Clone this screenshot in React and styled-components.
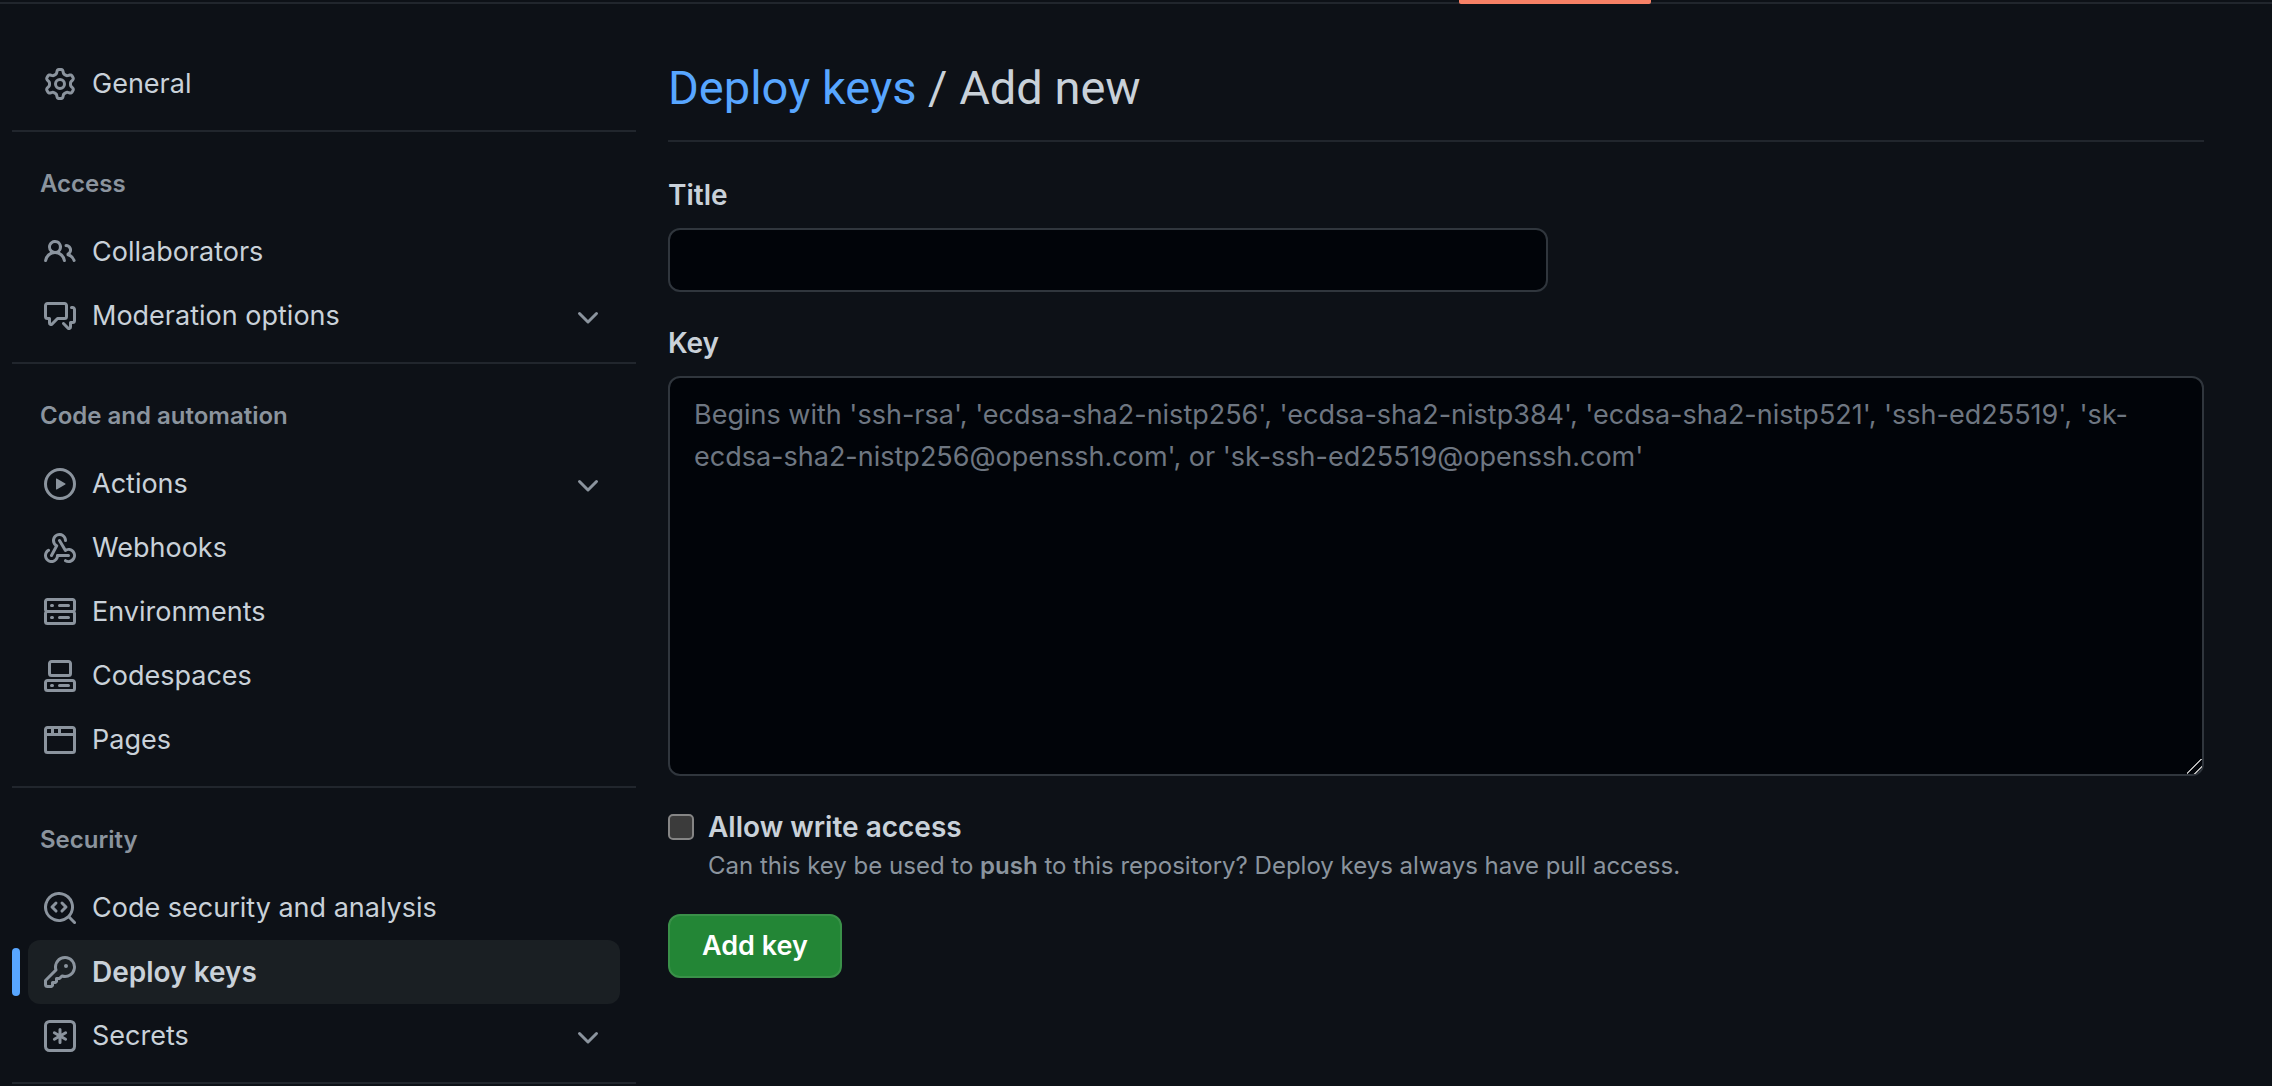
import React from "react";
import styled, { createGlobalStyle } from "styled-components";

const color = {
  canvas: "#0d1117",
  inset: "#010409",
  text: "#c9d1d9",
  muted: "#8b949e",
  subtle: "#6e7681",
  line: "#21262d",
  border: "#30363d",
  accent: "#58a6ff",
  tab: "#f78166",
};

const GlobalStyle = createGlobalStyle`
  *, *::before, *::after { box-sizing: border-box; }
  body {
    margin: 0;
    background: ${color.canvas};
    color: ${color.text};
    color-scheme: dark;
    font-family: Inter, "Liberation Sans", sans-serif;
    font-size: 27px;
    line-height: 42px;
  }
`;

const icons = {
  gear: [
    "M8 0a8.2 8.2 0 0 1 .701.031C9.444.095 9.99.645 10.16 1.29l.288 1.107c.018.066.079.158.212.224.231.114.454.243.668.386.123.082.233.09.299.071l1.103-.303c.644-.176 1.392.021 1.82.63.27.385.506.792.704 1.218.315.675.111 1.422-.364 1.891l-.814.806c-.049.048-.098.147-.088.294.016.257.016.515 0 .772-.01.147.038.246.088.294l.814.806c.475.469.679 1.216.364 1.891a7.977 7.977 0 0 1-.704 1.217c-.428.61-1.176.807-1.82.63l-1.102-.302c-.067-.019-.177-.011-.3.071a5.909 5.909 0 0 1-.668.386c-.133.066-.194.158-.211.224l-.29 1.106c-.168.646-.715 1.196-1.458 1.26a8.006 8.006 0 0 1-1.402 0c-.743-.064-1.289-.614-1.458-1.26l-.289-1.106c-.018-.066-.079-.158-.212-.224a5.738 5.738 0 0 1-.668-.386c-.123-.082-.233-.09-.299-.071l-1.103.303c-.644.176-1.392-.021-1.82-.63a8.12 8.12 0 0 1-.704-1.218c-.315-.675-.111-1.422.363-1.891l.815-.806c.05-.048.098-.147.088-.294a6.214 6.214 0 0 1 0-.772c.01-.147-.038-.246-.088-.294l-.815-.806C.635 6.045.431 5.298.746 4.623a7.92 7.92 0 0 1 .704-1.217c.428-.61 1.176-.807 1.82-.63l1.102.302c.067.019.177.011.3-.071.214-.143.437-.272.668-.386.133-.066.194-.158.211-.224l.29-1.106C6.009.645 6.556.095 7.299.03 7.53.01 7.764 0 8 0Zm-.571 1.525c-.036.003-.108.036-.137.146l-.289 1.105c-.147.561-.549.967-.998 1.189-.173.086-.34.183-.5.29-.417.278-.97.423-1.529.27l-1.103-.303c-.109-.03-.175.016-.195.045-.22.312-.412.644-.573.99-.014.031-.021.11.059.19l.815.806c.411.406.562.957.53 1.456a4.709 4.709 0 0 0 0 .582c.032.499-.119 1.05-.53 1.456l-.815.806c-.081.08-.073.159-.059.19.162.346.353.677.573.989.02.03.085.076.195.046l1.102-.303c.56-.153 1.113-.008 1.53.27.161.107.328.204.501.29.447.222.85.629.997 1.189l.289 1.105c.029.109.101.143.137.146a6.6 6.6 0 0 0 1.142 0c.036-.003.108-.036.137-.146l.289-1.105c.147-.561.549-.967.998-1.189.173-.086.34-.183.5-.29.417-.278.97-.423 1.529-.27l1.103.303c.109.029.175-.016.195-.045.22-.313.411-.644.573-.99.014-.031.021-.11-.059-.19l-.815-.806c-.411-.406-.562-.957-.53-1.456a4.709 4.709 0 0 0 0-.582c-.032-.499.119-1.05.53-1.456l.815-.806c.081-.08.073-.159.059-.19a6.464 6.464 0 0 0-.573-.989c-.02-.03-.085-.076-.195-.046l-1.102.303c-.56.153-1.113.008-1.53-.27a4.44 4.44 0 0 0-.501-.29c-.447-.222-.85-.629-.997-1.189l-.289-1.105c-.029-.11-.101-.143-.137-.146a6.6 6.6 0 0 0-1.142 0ZM11 8a3 3 0 1 1-6 0 3 3 0 0 1 6 0ZM9.5 8a1.5 1.5 0 1 0-3.001.001A1.5 1.5 0 0 0 9.5 8Z",
  ],
  people: [
    "M2 5.5a3.5 3.5 0 1 1 5.898 2.549 5.508 5.508 0 0 1 3.034 4.084.75.75 0 1 1-1.482.235 4 4 0 0 0-7.9 0 .75.75 0 0 1-1.482-.236A5.507 5.507 0 0 1 3.102 8.05 3.493 3.493 0 0 1 2 5.5ZM11 4a3.001 3.001 0 0 1 2.22 5.018 5.01 5.01 0 0 1 2.56 3.012.749.749 0 0 1-.885.954.752.752 0 0 1-.549-.514 3.507 3.507 0 0 0-2.522-2.372.75.75 0 0 1-.574-.73v-.352a.75.75 0 0 1 .416-.672A1.5 1.5 0 0 0 11 5.5.75.75 0 0 1 11 4Zm-5.5-.5a2 2 0 1 0-.001 3.999A2 2 0 0 0 5.5 3.5Z",
  ],
  discussion: [
    "M1.75 1h8.5c.966 0 1.75.784 1.75 1.75v5.5A1.75 1.75 0 0 1 10.25 10H7.061l-2.574 2.573A1.458 1.458 0 0 1 2 11.543V10h-.25A1.75 1.75 0 0 1 0 8.25v-5.5C0 1.784.784 1 1.75 1ZM1.5 2.75v5.5c0 .138.112.25.25.25h1a.75.75 0 0 1 .75.75v2.19l2.72-2.72a.749.749 0 0 1 .53-.22h3.5a.25.25 0 0 0 .25-.25v-5.5a.25.25 0 0 0-.25-.25h-8.5a.25.25 0 0 0-.25.25Zm13 2a.25.25 0 0 0-.25-.25h-.5a.75.75 0 0 1 0-1.5h.5c.966 0 1.75.784 1.75 1.75v5.5A1.75 1.75 0 0 1 14.25 12H14v1.543a1.458 1.458 0 0 1-2.487 1.03L9.22 12.28a.749.749 0 0 1 .326-1.275.749.749 0 0 1 .734.215l2.22 2.22v-2.19a.75.75 0 0 1 .75-.75h1a.25.25 0 0 0 .25-.25Z",
  ],
  play: [
    "M8 0a8 8 0 1 1 0 16A8 8 0 0 1 8 0ZM1.5 8a6.5 6.5 0 1 0 13 0 6.5 6.5 0 0 0-13 0Zm4.879-2.773 4.264 2.559a.25.25 0 0 1 0 .428l-4.264 2.559A.25.25 0 0 1 6 10.559V5.442a.25.25 0 0 1 .379-.215Z",
  ],
  webhook: [
    "M5.5 4.25a2.25 2.25 0 0 1 4.5 0 .75.75 0 0 0 1.5 0 3.75 3.75 0 1 0-6.14 2.889l-2.272 4.258a.75.75 0 0 0 1.324.706L7 7.25a.75.75 0 0 0-.309-1.015A2.25 2.25 0 0 1 5.5 4.25Z",
    "M7.364 3.607a.75.75 0 0 1 1.03.257l2.608 4.349a3.75 3.75 0 1 1-.628 6.785.75.75 0 0 1 .752-1.299 2.25 2.25 0 1 0-.033-3.88.75.75 0 0 1-1.03-.256L7.107 4.636a.75.75 0 0 1 .257-1.03Z",
    "M2.9 8.776A.75.75 0 0 1 2.625 9.8 2.25 2.25 0 1 0 6 11.75a.75.75 0 0 1 .75-.751h5.5a.75.75 0 0 1 0 1.5H7.425a3.751 3.751 0 1 1-5.55-3.998.75.75 0 0 1 1.024.274Z",
  ],
  server: [
    "M1.75 1h12.5c.966 0 1.75.784 1.75 1.75v4c0 .372-.116.717-.314 1 .198.283.314.628.314 1v4a1.75 1.75 0 0 1-1.75 1.75H1.75A1.75 1.75 0 0 1 0 12.75v-4c0-.358.109-.707.314-1a1.739 1.739 0 0 1-.314-1v-4C0 1.784.784 1 1.75 1ZM1.5 2.75v4c0 .138.112.25.25.25h12.5a.25.25 0 0 0 .25-.25v-4a.25.25 0 0 0-.25-.25H1.75a.25.25 0 0 0-.25.25Zm.25 5.75a.25.25 0 0 0-.25.25v4c0 .138.112.25.25.25h12.5a.25.25 0 0 0 .25-.25v-4a.25.25 0 0 0-.25-.25ZM7 4.75A.75.75 0 0 1 7.75 4h4.5a.75.75 0 0 1 0 1.5h-4.5A.75.75 0 0 1 7 4.75ZM7.75 10h4.5a.75.75 0 0 1 0 1.5h-4.5a.75.75 0 0 1 0-1.5ZM3 4.75A.75.75 0 0 1 3.75 4h.5a.75.75 0 0 1 0 1.5h-.5A.75.75 0 0 1 3 4.75ZM3.75 10h.5a.75.75 0 0 1 0 1.5h-.5a.75.75 0 0 1 0-1.5Z",
  ],
  codespaces: [
    "M0 11.25c0-.966.784-1.75 1.75-1.75h12.5c.966 0 1.75.784 1.75 1.75v3A1.75 1.75 0 0 1 14.25 16H1.75A1.75 1.75 0 0 1 0 14.25Zm2-9.5C2 .784 2.784 0 3.75 0h8.5C13.216 0 14 .784 14 1.75v5a1.75 1.75 0 0 1-1.75 1.75h-8.5A1.75 1.75 0 0 1 2 6.75Zm1.75-.25a.25.25 0 0 0-.25.25v5c0 .138.112.25.25.25h8.5a.25.25 0 0 0 .25-.25v-5a.25.25 0 0 0-.25-.25Zm-2 9.5a.25.25 0 0 0-.25.25v3c0 .138.112.25.25.25h12.5a.25.25 0 0 0 .25-.25v-3a.25.25 0 0 0-.25-.25Z",
    "M7 12.75a.75.75 0 0 1 .75-.75h4.5a.75.75 0 0 1 0 1.5h-4.5a.75.75 0 0 1-.75-.75Zm-4 0a.75.75 0 0 1 .75-.75h.5a.75.75 0 0 1 0 1.5h-.5a.75.75 0 0 1-.75-.75Z",
  ],
  browser: [
    "M0 2.75C0 1.784.784 1 1.75 1h12.5c.966 0 1.75.784 1.75 1.75v10.5A1.75 1.75 0 0 1 14.25 15H1.75A1.75 1.75 0 0 1 0 13.25ZM14.5 6h-13v7.25c0 .138.112.25.25.25h12.5a.25.25 0 0 0 .25-.25Zm-6-3.5v2h6V2.75a.25.25 0 0 0-.25-.25ZM5 2.5v2h2v-2Zm-3.25 0a.25.25 0 0 0-.25.25V4.5h2v-2Z",
  ],
  codescan: [
    "M8.47 4.97a.75.75 0 0 0 0 1.06L9.94 7.5 8.47 8.97a.75.75 0 1 0 1.06 1.06l2-2a.75.75 0 0 0 0-1.06l-2-2a.75.75 0 0 0-1.06 0ZM6.53 6.03a.75.75 0 0 0-1.06-1.06l-2 2a.75.75 0 0 0 0 1.06l2 2a.75.75 0 1 0 1.06-1.06L5.06 7.5l1.47-1.47Z",
    "M12.246 13.307a7.501 7.501 0 1 1 1.06-1.06l2.474 2.473a.749.749 0 0 1-.326 1.275.749.749 0 0 1-.734-.215ZM1.5 7.5a6.002 6.002 0 0 0 3.608 5.504 6.002 6.002 0 0 0 6.486-1.117.748.748 0 0 1 .292-.293A6 6 0 1 0 1.5 7.5Z",
  ],
  key: [
    "M10.5 0a5.499 5.499 0 1 1-1.288 10.848l-.932.932a.749.749 0 0 1-.53.22H7v.75a.749.749 0 0 1-.22.53l-.5.5a.749.749 0 0 1-.53.22H5v.75a.749.749 0 0 1-.22.53l-.5.5a.749.749 0 0 1-.53.22h-2A1.75 1.75 0 0 1 0 14.25v-2c0-.199.079-.389.22-.53l4.932-4.932A5.5 5.5 0 0 1 10.5 0Zm-4 5.5c-.001.431.069.86.205 1.269a.75.75 0 0 1-.181.768L1.5 12.56v1.69c0 .138.112.25.25.25h1.69l.06-.06v-1.19a.75.75 0 0 1 .75-.75h1.19l.06-.06v-1.19a.75.75 0 0 1 .75-.75h1.19l1.023-1.025a.75.75 0 0 1 .768-.18A4 4 0 1 0 6.5 5.5ZM11 6a1 1 0 1 1 0-2 1 1 0 0 1 0 2Z",
  ],
  asterisk: [
    "M0 2.75A2.75 2.75 0 0 1 2.75 0h10.5A2.75 2.75 0 0 1 16 2.75v10.5A2.75 2.75 0 0 1 13.25 16H2.75A2.75 2.75 0 0 1 0 13.25ZM2.75 1.5c-.69 0-1.25.56-1.25 1.25v10.5c0 .69.56 1.25 1.25 1.25h10.5c.69 0 1.25-.56 1.25-1.25V2.75c0-.69-.56-1.25-1.25-1.25Z",
    "M8 4a.75.75 0 0 1 .75.75V6.7l1.69-.975a.75.75 0 0 1 .75 1.3L9.5 8l1.69.976a.75.75 0 0 1-.75 1.298L8.75 9.3v1.951a.75.75 0 0 1-1.5 0V9.299l-1.69.976a.75.75 0 0 1-.75-1.3L6.5 8l-1.69-.975a.75.75 0 0 1 .75-1.3l1.69.976V4.75A.75.75 0 0 1 8 4Z",
  ],
  chevron: [
    "M12.78 5.22a.749.749 0 0 1 0 1.06l-4.25 4.25a.749.749 0 0 1-1.06 0L3.22 6.28a.749.749 0 1 1 1.06-1.06L8 8.939l3.72-3.719a.749.749 0 0 1 1.06 0Z",
  ],
};

const Svg = styled.svg`
  flex: none;
  width: 32px;
  height: 32px;
  fill: ${color.muted};
`;

function Icon({ name, className }) {
  return (
    <Svg viewBox="0 0 16 16" aria-hidden="true" className={className}>
      {icons[name].map((d) => (
        <path key={d} d={d} />
      ))}
    </Svg>
  );
}

const TopBar = styled.div`
  position: relative;
  height: 4px;
  border-bottom: 2px solid ${color.line};
`;

const ActiveTab = styled.div`
  position: absolute;
  top: 0;
  left: 1459px;
  width: 192px;
  height: 4px;
  border-radius: 0 0 2px 2px;
  background: ${color.tab};
`;

const Layout = styled.div`
  display: grid;
  grid-template-columns: 624px minmax(0, 1fr);
  gap: 32px;
  padding: 48px 68px 0 12px;
`;

const Section = styled.section`
  padding-bottom: 14px;
  border-bottom: 2px solid ${color.line};

  & + & {
    padding-top: 16px;
  }
`;

const SectionTitle = styled.h2`
  margin: 0;
  padding: 18px 28px;
  color: ${color.muted};
  font-size: 24px;
  font-weight: 600;
  line-height: 36px;
`;

const List = styled.ul`
  margin: 0;
  padding: 0 16px;
  list-style: none;
`;

const Item = styled.li`
  position: relative;

  &::before {
    content: "";
    display: ${(p) => (p.$current ? "block" : "none")};
    position: absolute;
    top: 8px;
    bottom: 8px;
    left: -16px;
    width: 8px;
    border-radius: 4px;
    background: ${color.accent};
  }
`;

const Row = styled.a`
  display: flex;
  align-items: center;
  gap: 16px;
  width: 100%;
  height: 64px;
  padding: 0 16px;
  border: 0;
  border-radius: 12px;
  background: ${(p) => (p.$current ? "#1a1f23" : "none")};
  color: ${color.text};
  font: inherit;
  font-size: ${(p) => (p.$current ? 28 : 27)}px;
  font-weight: ${(p) => (p.$current ? 600 : 400)};
  text-align: left;
  text-decoration: none;
  cursor: pointer;
`;

const RowText = styled.span`
  flex: 1;
`;

const Chevron = styled(Icon)`
  height: 36px;
  padding-top: 4px;
`;

const Heading = styled.h1`
  margin: 0 0 32px;
  padding-bottom: 16px;
  border-bottom: 2px solid ${color.line};
  font-family: Roboto, Inter, sans-serif;
  font-size: 47px;
  font-weight: 400;
  line-height: 72px;

  a {
    color: ${color.accent};
    text-decoration: none;
  }
`;

const Form = styled.form`
  display: flex;
  flex-direction: column;
  align-items: flex-start;
  gap: 30px;
`;

const Field = styled.div`
  display: flex;
  flex-direction: column;
  gap: 12px;
  width: 100%;
`;

const Label = styled.label`
  font-size: 28px;
  font-weight: 600;
`;

const TextInput = styled.input`
  width: 100%;
  max-width: 880px;
  height: 64px;
  padding: 10px 24px;
  border: 2px solid ${color.border};
  border-radius: 12px;
  background: ${color.inset};
  color: ${color.text};
  font: inherit;
`;

const TextArea = styled.textarea`
  display: block;
  width: 100%;
  height: 400px;
  padding: 16px 24px;
  border: 2px solid ${color.border};
  border-radius: 12px;
  background: ${color.inset};
  color: ${color.text};
  font: inherit;
  resize: vertical;

  &::placeholder {
    color: ${color.subtle};
    opacity: 1;
  }

  &::-webkit-resizer {
    background: linear-gradient(
      135deg,
      transparent 44%,
      #b4b4b4 45%,
      #b4b4b4 51%,
      transparent 52%,
      transparent 70%,
      #b4b4b4 71%,
      #b4b4b4 77%,
      transparent 78%
    );
  }
`;

const CheckRow = styled.div`
  display: grid;
  grid-template-columns: 26px 1fr;
  column-gap: 14px;
  align-items: center;
`;

const Checkbox = styled.input`
  appearance: none;
  width: 26px;
  height: 26px;
  margin: 0;
  border: 2px solid #858585;
  border-radius: 5px;
  background: #3b3b3b;

  &:checked {
    background: ${color.accent};
  }
`;

const Note = styled.p`
  grid-column: 2;
  margin: 0;
  color: ${color.muted};
  font-size: 24px;
  line-height: 36px;

  strong {
    font-weight: 600;
  }
`;

const SubmitButton = styled.button`
  height: 64px;
  padding: 0 32px;
  border: 2px solid #3a9149;
  border-radius: 12px;
  background: #238636;
  color: #fff;
  font: inherit;
  font-weight: 600;
  cursor: pointer;
`;

const sections = [
  { items: [{ icon: "gear", text: "General" }] },
  {
    title: "Access",
    items: [
      { icon: "people", text: "Collaborators" },
      { icon: "discussion", text: "Moderation options", expands: true },
    ],
  },
  {
    title: "Code and automation",
    items: [
      { icon: "play", text: "Actions", expands: true },
      { icon: "webhook", text: "Webhooks" },
      { icon: "server", text: "Environments" },
      { icon: "codespaces", text: "Codespaces" },
      { icon: "browser", text: "Pages" },
    ],
  },
  {
    title: "Security",
    items: [
      { icon: "codescan", text: "Code security and analysis" },
      { icon: "key", text: "Deploy keys", current: true },
      { icon: "asterisk", text: "Secrets", expands: true },
    ],
  },
];

function NavItem({ icon, text, expands, current }) {
  const props = expands ? { as: "button", type: "button" } : { href: "#" };
  return (
    <Item $current={current}>
      <Row {...props} $current={current} aria-current={current ? "page" : undefined}>
        <Icon name={icon} />
        <RowText>{text}</RowText>
        {expands && <Chevron name="chevron" />}
      </Row>
    </Item>
  );
}

export default function App() {
  return (
    <>
      <GlobalStyle />
      <TopBar>
        <ActiveTab />
      </TopBar>
      <Layout>
        <nav>
          {sections.map((section, i) => (
            <Section key={i}>
              {section.title && <SectionTitle>{section.title}</SectionTitle>}
              <List>
                {section.items.map((item) => (
                  <NavItem key={item.text} {...item} />
                ))}
              </List>
            </Section>
          ))}
        </nav>
        <main>
          <Heading>
            <a href="#">Deploy keys</a> / Add new
          </Heading>
          <Form onSubmit={(e) => e.preventDefault()}>
            <Field>
              <Label htmlFor="title">Title</Label>
              <TextInput id="title" type="text" />
            </Field>
            <Field>
              <Label htmlFor="key">Key</Label>
              <TextArea
                id="key"
                spellCheck="false"
                placeholder="Begins with 'ssh-rsa', 'ecdsa-sha2-nistp256', 'ecdsa-sha2-nistp384', 'ecdsa-sha2-nistp521', 'ssh-ed25519', 'sk-ecdsa-sha2-nistp256@openssh.com', or 'sk-ssh-ed25519@openssh.com'"
              />
            </Field>
            <CheckRow>
              <Checkbox id="write" type="checkbox" />
              <Label htmlFor="write">Allow write access</Label>
              <Note>
                Can this key be used to <strong>push</strong> to this repository? Deploy keys always
                have pull access.
              </Note>
            </CheckRow>
            <SubmitButton type="submit">Add key</SubmitButton>
          </Form>
        </main>
      </Layout>
    </>
  );
}
